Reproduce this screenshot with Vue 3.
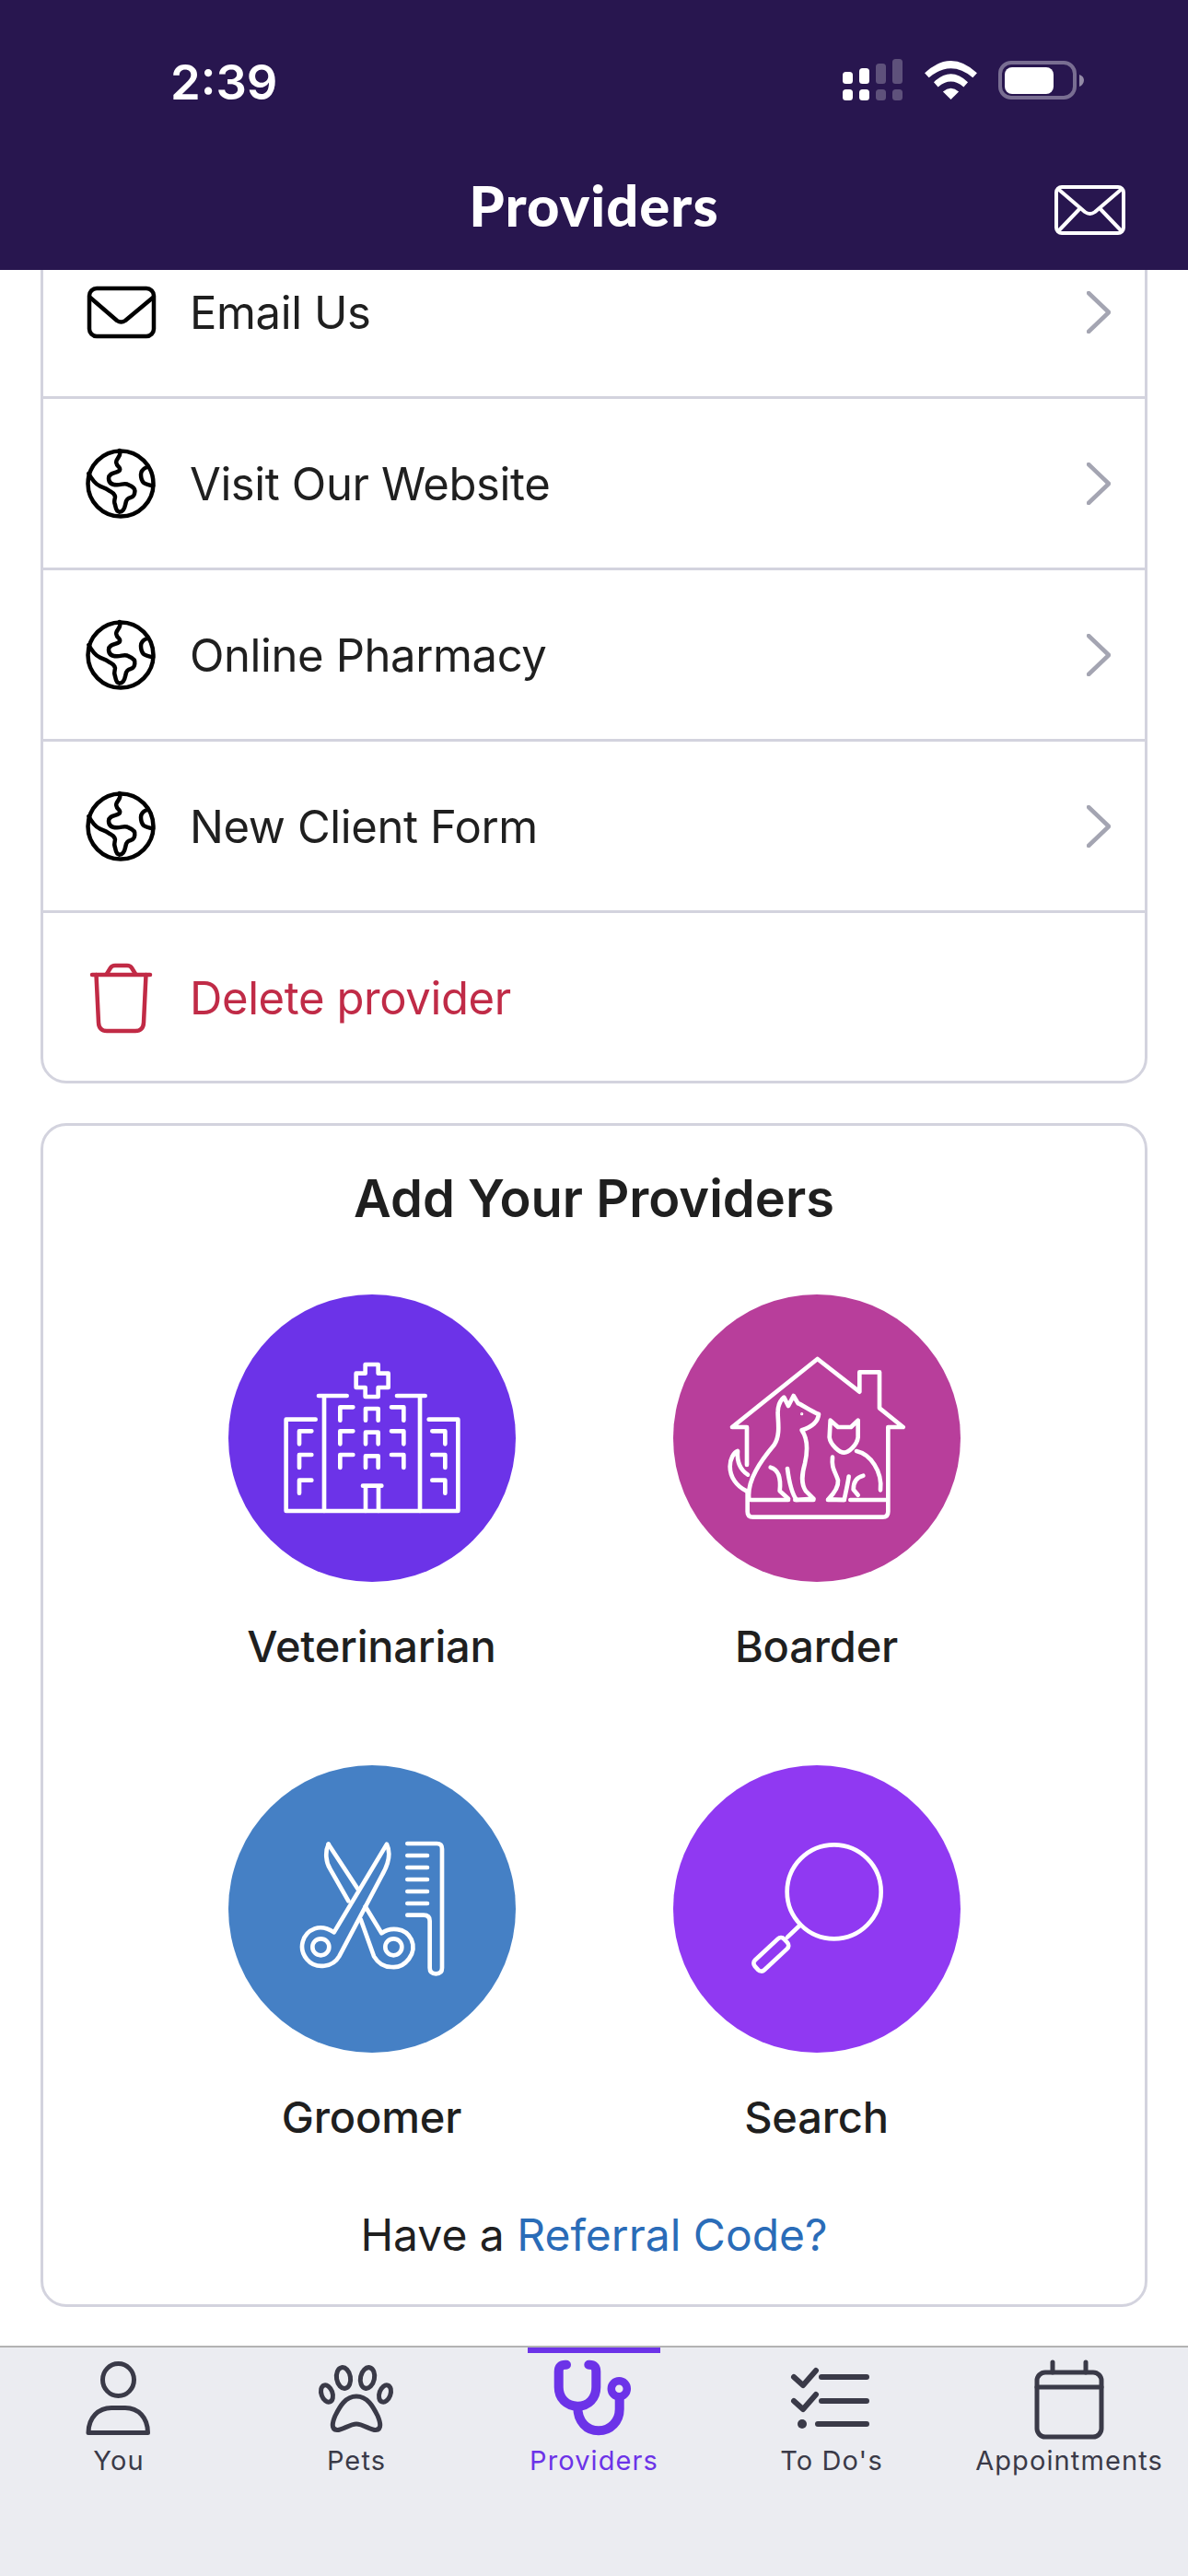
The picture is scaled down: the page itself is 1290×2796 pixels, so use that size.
<script setup>
const rows = [
  { icon: 'mail', label: 'Email Us' },
  { icon: 'globe', label: 'Visit Our Website' },
  { icon: 'globe', label: 'Online Pharmacy' },
  { icon: 'globe', label: 'New Client Form' },
]
const tabs = [
  { id: 'you', label: 'You' },
  { id: 'pets', label: 'Pets' },
  { id: 'providers', label: 'Providers', active: true },
  { id: 'todos', label: "To Do's" },
  { id: 'appointments', label: 'Appointments' },
]
</script>

<template>
  <div class="phone">
    <header class="header">
      <div class="status">
        <span class="time">2:39</span>
        <div class="status-icons">
          <svg viewBox="0 0 66 45" width="66" height="45" fill="#fff">
            <rect x="0" y="14" width="11" height="13" rx="3.500"/><rect x="0" y="33" width="11" height="12" rx="3.500"/>
            <rect x="18" y="10" width="11" height="17" rx="3.500"/><rect x="18" y="33" width="11" height="12" rx="3.500"/>
            <g opacity=".25"><rect x="36" y="5" width="11" height="22" rx="3.500"/><rect x="36" y="33" width="11" height="12" rx="3.500"/>
            <rect x="54" y="0" width="11" height="27" rx="3.500"/><rect x="54" y="33" width="11" height="12" rx="3.500"/></g>
          </svg>
          <svg viewBox="312 45 172 127" width="57" height="42" fill="#fff">
            <path d="M312 85 Q398 5 484 85 L470 100 Q398 40 326 100Z"/>
            <path d="M342 115 Q398 61 454 115 L440 131 Q398 95 356 131Z"/>
            <path d="M372 146 Q398 124 424 146 L398 172Z"/>
          </svg>
          <svg viewBox="0 0 93 42" width="93" height="42">
            <rect x="2" y="2" width="81" height="38" rx="12" fill="none" stroke="#fff" stroke-opacity=".38" stroke-width="4"/>
            <rect x="7" y="7" width="53" height="29" rx="8" fill="#fff"/>
            <path d="M88 15 C91 16 93 18 93 21 C93 24 91 27 88 28Z" fill="#fff" fill-opacity=".5"/>
          </svg>
        </div>
      </div>
      <div class="title-bar">
        <h1 class="title">Providers</h1>
        <svg class="envelope" viewBox="0 0 77 54" width="77" height="54" fill="none" stroke="#fff" stroke-width="4" stroke-linejoin="round" stroke-linecap="round">
          <rect x="2" y="2" width="73" height="50" rx="6"/>
          <path d="M5 5 L33 29 Q38.500 33 44 29 L72 5"/><path d="M5 49 L27 26"/><path d="M72 49 L50 26"/>
        </svg>
      </div>
    </header>

    <main class="scroller">
      <section class="card list">
        <a v-for="row in rows" :key="row.label" class="row">
          <svg v-if="row.icon === 'mail'" class="row-icon" viewBox="0 0 76 76" width="76" height="76" fill="none" stroke="#000" stroke-width="4.500" stroke-linejoin="round" stroke-linecap="round">
            <rect x="4" y="12" width="70" height="52" rx="8"/>
            <path d="M5 22 L34 47 Q38.500 50 43 47 L73 22"/>
          </svg>
          <svg v-else class="row-icon" viewBox="0 0 76 76" width="76" height="76" fill="none" stroke="#000" stroke-width="4.500" stroke-linejoin="round" stroke-linecap="round">
            <circle cx="38" cy="38" r="35.500"/>
            <path d="M36.700 2 C40 8 32 11 33.300 15.300 C34 20 39 20 36.700 23.700 C33 27 25 26 25 32 C25 38 30 39.300 34 39.300 C40 39 43 37 46.700 39.300 C51 41 54 44 53.300 47 C53 51 51.700 52 49 53 C44 54 44 57 43.300 60 C42.500 64 41 68.700 36.700 68.700 C32 68 33 63 31.700 60 C30 56 33 53 31.700 51 C30 47 27 47 25 45.300 C21 42 17 42 15 40.300 C10 38 6 32 3.300 27"/>
            <path d="M66 20.300 C62 22 60 25 60 28 C60 33 61 35 63 37 C65 38.500 69 39.500 73.300 40.300"/>
          </svg>
          <span class="row-label">{{ row.label }}</span>
          <svg class="chevron" viewBox="0 0 26 46" width="26" height="46" fill="none" stroke="#a4a5b2" stroke-width="4.500" stroke-linecap="round" stroke-linejoin="round">
            <path d="M2 2 L24 23 L2 44" />
          </svg>
        </a>
        <a class="row delete">
          <svg class="row-icon" viewBox="0 0 76 76" width="76" height="76" fill="none" stroke="#c12a45" stroke-width="4.500" stroke-linejoin="round" stroke-linecap="round">
            <path d="M7 12 H70"/>
            <path d="M11.500 12 L14 64 Q14.500 73 23 73 H54 Q62.500 73 63 64 L65.500 12"/>
            <path d="M23 11 L27 4.500 Q28.500 2 32 2 H45 Q48.500 2 50 4.500 L54 11"/>
          </svg>
          <span class="row-label">Delete provider</span>
        </a>
      </section>

      <section class="card add">
        <h2 class="add-title">Add Your Providers</h2>
        <div class="grid">
          <div class="tile">
            <svg class="circle" viewBox="24 15 936 936" width="312" height="312" fill="none" stroke="#fff" stroke-width="14" stroke-linecap="round" stroke-linejoin="round">
              <circle cx="492" cy="483" r="468" fill="#6c33e8" stroke="none"/>
              <path d="M470 243 H512 V272 H545 V318 H512 V348 H470 V318 H440 V272 H470Z"/>
              <path d="M318 345 H410 M573 345 H665 M336 345 V720 M648 345 V720"/>
              <path d="M308 422 H212 V720 H772 V422 H677"/>
              <path d="M430 382 H388 V425 M430 460 H388 V502 M430 537 H388 V579"/>
              <path d="M471 425 V387 H512 V425 M471 502 V464 H512 V502 M471 579 V541 H512 V579"/>
              <path d="M555 382 H595 V425 M555 460 H595 V502 M555 537 H595 V579"/>
              <path d="M295 460 H255 V502 M295 537 H255 V579 M295 620 H255 V662"/>
              <path d="M688 460 H730 V502 M688 537 H730 V579 M688 620 H730 V662"/>
              <path d="M462 638 H523 M471 638 V720 M513 638 V720"/>
            </svg>
            <span class="tile-label">Veterinarian</span>
          </div>
          <div class="tile">
            <svg class="circle" viewBox="33 15 936 936" width="312" height="312" fill="none" stroke="#fff" stroke-width="14" stroke-linecap="round" stroke-linejoin="round">
              <circle cx="501" cy="483" r="468" fill="#b83e9b" stroke="none"/>
              <path d="M273 570 V447 H225 L503 225 L640 332 V268 H705 V385 L782 447 H733 V722 Q733 740 715 740 H293 Q275 740 275 722 V655"/>
              <path d="M285 684 H408 M430 684 H490 M537 684 H590 M610 684 H725"/>
              <path d="M272 655 C240 640 218 610 218 575 C218 550 230 530 243 525 C240 560 250 585 276 602"/>
              <path d="M280 682 C272 620 320 555 362 505 C385 470 372 420 374 395 C375 375 382 360 394 350 L408 378 L425 345 L440 370 C455 375 480 395 507 405 C505 425 490 445 452 457 C475 490 470 530 462 565 C452 600 448 630 465 655 L490 680 L435 684 C420 665 410 620 405 582"/>
              <path d="M350 578 C375 585 385 610 380 655 L408 680"/>
              <circle cx="452" cy="404" r="2" stroke-width="6"/>
              <path d="M545 425 L570 447 H612 L635 425 V480 C632 505 605 530 590 530 C575 530 545 505 542 480Z"/>
              <path d="M552 545 C548 580 560 590 570 620 C572 645 555 665 538 682 L590 684 C595 660 602 630 605 608"/>
              <path d="M630 525 C675 535 715 590 708 652"/>
              <path d="M652 605 C630 610 620 625 620 650 L635 668"/>
            </svg>
            <span class="tile-label">Boarder</span>
          </div>
          <div class="tile">
            <svg class="circle" viewBox="24 18 936 936" width="312" height="312" fill="none" stroke="#fff" stroke-width="14" stroke-linecap="round" stroke-linejoin="round">
              <circle cx="492" cy="486" r="468" fill="#4580c5" stroke="none"/>
              <path d="M540 275 C552 300 548 335 525 375 L385 640 C365 675 310 685 280 650 C250 615 265 565 305 550 C325 543 350 550 368 562 L540 275Z"/>
              <circle cx="325" cy="610" r="27"/>
              <path d="M350 275 C338 300 342 335 355 355 L415 460"/>
              <path d="M350 275 L445 420"/>
              <path d="M470 478 L523 565 C550 545 600 545 620 585 C640 630 600 680 555 675 C530 675 510 660 498 640 L455 520"/>
              <circle cx="562" cy="610" r="27"/>
              <path d="M607 273 H703 Q720 273 720 290 V678 Q720 697 700 697 Q680 697 680 678 V525 Q680 506 660 506 H607"/>
              <path d="M607 312 H672 M607 351 H672 M607 390 H672 M607 429 H672 M607 468 H672"/>
            </svg>
            <span class="tile-label">Groomer</span>
          </div>
          <div class="tile">
            <svg class="circle" viewBox="33 18 936 936" width="312" height="312" fill="none" stroke="#fff" stroke-width="14" stroke-linecap="round" stroke-linejoin="round">
              <circle cx="501" cy="486" r="468" fill="#9039f2" stroke="none"/>
              <circle cx="557" cy="430" r="153"/>
              <path d="M445 540 L405 578"/>
              <rect x="-65" y="-22" width="130" height="44" rx="14" transform="translate(352 634) rotate(-43)"/>
            </svg>
            <span class="tile-label">Search</span>
          </div>
        </div>
        <p class="referral">Have a <a class="link">Referral Code?</a></p>
      </section>
    </main>

    <nav class="tabs">
      <div v-for="tab in tabs" :key="tab.id" class="tab" :class="{ active: tab.active }">
        <svg class="tab-icon" viewBox="0 0 100 90" width="100" height="90" fill="none" stroke="currentColor" stroke-width="5" stroke-linecap="round" stroke-linejoin="round">
          <template v-if="tab.id === 'you'">
            <ellipse cx="49.500" cy="25" rx="17" ry="17.500"/>
            <path d="M17 82.500 C17 66 28 55.500 42 55.500 H57 C71 55.500 81.500 66 81.500 82.500Z"/>
          </template>
          <template v-else-if="tab.id === 'pets'">
            <ellipse cx="36" cy="23" rx="7.500" ry="11.500" transform="rotate(-10 36 23)"/>
            <ellipse cx="62" cy="23" rx="7.500" ry="11.500" transform="rotate(12 62 23)"/>
            <ellipse cx="18" cy="40" rx="6" ry="9.500" transform="rotate(-20 18 40)"/>
            <ellipse cx="81" cy="40" rx="6" ry="9.500" transform="rotate(20 81 40)"/>
            <path d="M50 43 C38 43 32 54 27 64 C24 71 22 79 29 79.500 C34 80 43 73 50 73 C57 73 66 80 71 79.500 C78 79 76 71 73 64 C68 54 62 43 50 43Z"/>
          </template>
          <template v-else-if="tab.id === 'providers'">
            <g stroke-width="10">
              <path d="M20 8.700 H19 Q11.700 8.700 11.700 16 V33 C11.700 45 20 53.700 32.300 53.700 C44 53.700 52.300 45 52.300 33 V16 Q52.300 8.700 45 8.700 H44.300"/>
              <path d="M32.300 55 C32.300 70 42 80.300 55 80.300 C68 80.300 77.700 70 77.700 57 V44"/>
              <circle cx="77.300" cy="34.700" r="8.500" stroke-width="8.500"/>
            </g>
          </template>
          <template v-else-if="tab.id === 'todos'">
            <g stroke-width="6">
              <path d="M9 22 L19 31 L33 15"/><path d="M9 48 L19 57 L33 41"/>
              <path d="M39 22 H88 M39 48 H88 M35 73 H88"/>
            </g>
            <circle cx="18" cy="73" r="5" fill="currentColor" stroke="none"/>
          </template>
          <template v-else>
            <rect x="15" y="17" width="70" height="70" rx="9"/>
            <path d="M15 33 H85 M32 6 V17 M68 6 V17"/>
          </template>
        </svg>
        <span class="tab-label">{{ tab.label }}</span>
      </div>
    </nav>
  </div>
</template>

<style scoped>
.phone {
  width: 1290px;
  height: 2796px;
  display: flex;
  flex-direction: column;
  overflow: hidden;
  background: #fff;
  font-family: Inter, "Noto Sans", sans-serif;
}
.header {
  height: 293px;
  flex: none;
  background: #28164f;
  color: #fff;
  display: flex;
  flex-direction: column;
}
.status {
  height: 175px;
  padding: 64px 113px 0 185px;
  box-sizing: border-box;
  display: flex;
  justify-content: space-between;
  align-items: flex-start;
}
.time {
  font-size: 52.500px;
  line-height: 46px;
  font-weight: 600;
  margin-top: 2px;
}
.status-icons {
  display: flex;
  align-items: center;
  gap: 23px;
  height: 45px;
}
.title-bar {
  flex: 1;
  display: flex;
  align-items: center;
  justify-content: center;
  position: relative;
  padding-bottom: 24px;
}
.title {
  margin: 0;
  font-family: Lato, sans-serif;
  font-weight: 900;
  font-size: 61.500px;
  line-height: 70px;
  letter-spacing: 1px;
}
.envelope {
  position: absolute;
  right: 68px;
  top: 26px;
}
.scroller {
  flex: 1;
  min-height: 0;
  overflow: hidden;
  padding: 0 44px;
}
.card {
  border: 3px solid #d3d3de;
  border-radius: 28px;
  box-sizing: border-box;
}
.list {
  margin-top: -49px;
}
.row {
  display: flex;
  align-items: center;
  height: 186px;
  box-sizing: border-box;
  padding: 0 37px 0 46px;
  border-bottom: 3px solid #d3d3de;
  color: #1f1f1f;
}
.row.delete {
  border-bottom: 0;
  height: 182px;
  padding-top: 4px;
  color: #c02b47;
}
.row-icon {
  flex: none;
  margin-right: 37px;
  overflow: visible;
}
.row-label {
  flex: 1;
  margin-top: 2px;
  font-size: 49px;
  line-height: 60px;
  letter-spacing: -0.4px;
}
.delete .row-label {
  margin-top: 0;
}
.chevron {
  flex: none;
}
.add {
  margin-top: 43px;
  height: 1285px;
  padding-top: 46px;
  text-align: center;
}
.add-title {
  margin: 0;
  font-size: 56px;
  line-height: 66px;
  font-weight: 600;
  color: #1f1f1f;
}
.grid {
  display: grid;
  grid-template-columns: 312px 312px;
  grid-template-rows: 511px 480px;
  column-gap: 171px;
  justify-content: center;
  margin-top: 71px;
}
.tile {
  display: flex;
  flex-direction: column;
  align-items: center;
}
.circle {
  display: block;
  flex: none;
}
.tile-label {
  margin-top: 43px;
  font-size: 47px;
  line-height: 54px;
  font-weight: 500;
  letter-spacing: -0.2px;
  color: #1f1f1f;
}
.referral {
  margin: 0;
  font-size: 48px;
  line-height: 60px;
  color: #1f1f1f;
}
.link {
  color: #2a6cb8;
}
.tabs {
  flex: none;
  height: 250px;
  box-sizing: border-box;
  border-top: 2px solid #b3b3b3;
  background: #ebecf1;
  display: grid;
  grid-template-columns: repeat(5, 258px);
}
.tab {
  position: relative;
  display: flex;
  flex-direction: column;
  align-items: center;
  padding-top: 10px;
  color: #3a3a48;
}
.tab.active {
  color: #6c33e8;
}
.tab.active::before {
  content: "";
  position: absolute;
  top: 0;
  left: 57px;
  width: 144px;
  height: 6px;
  background: #6c33e8;
}
.tab-icon {
  display: block;
  flex: none;
}
.tab-label {
  margin-top: 5px;
  font-size: 29px;
  line-height: 36px;
  letter-spacing: 1.100px;
  white-space: nowrap;
}
</style>
